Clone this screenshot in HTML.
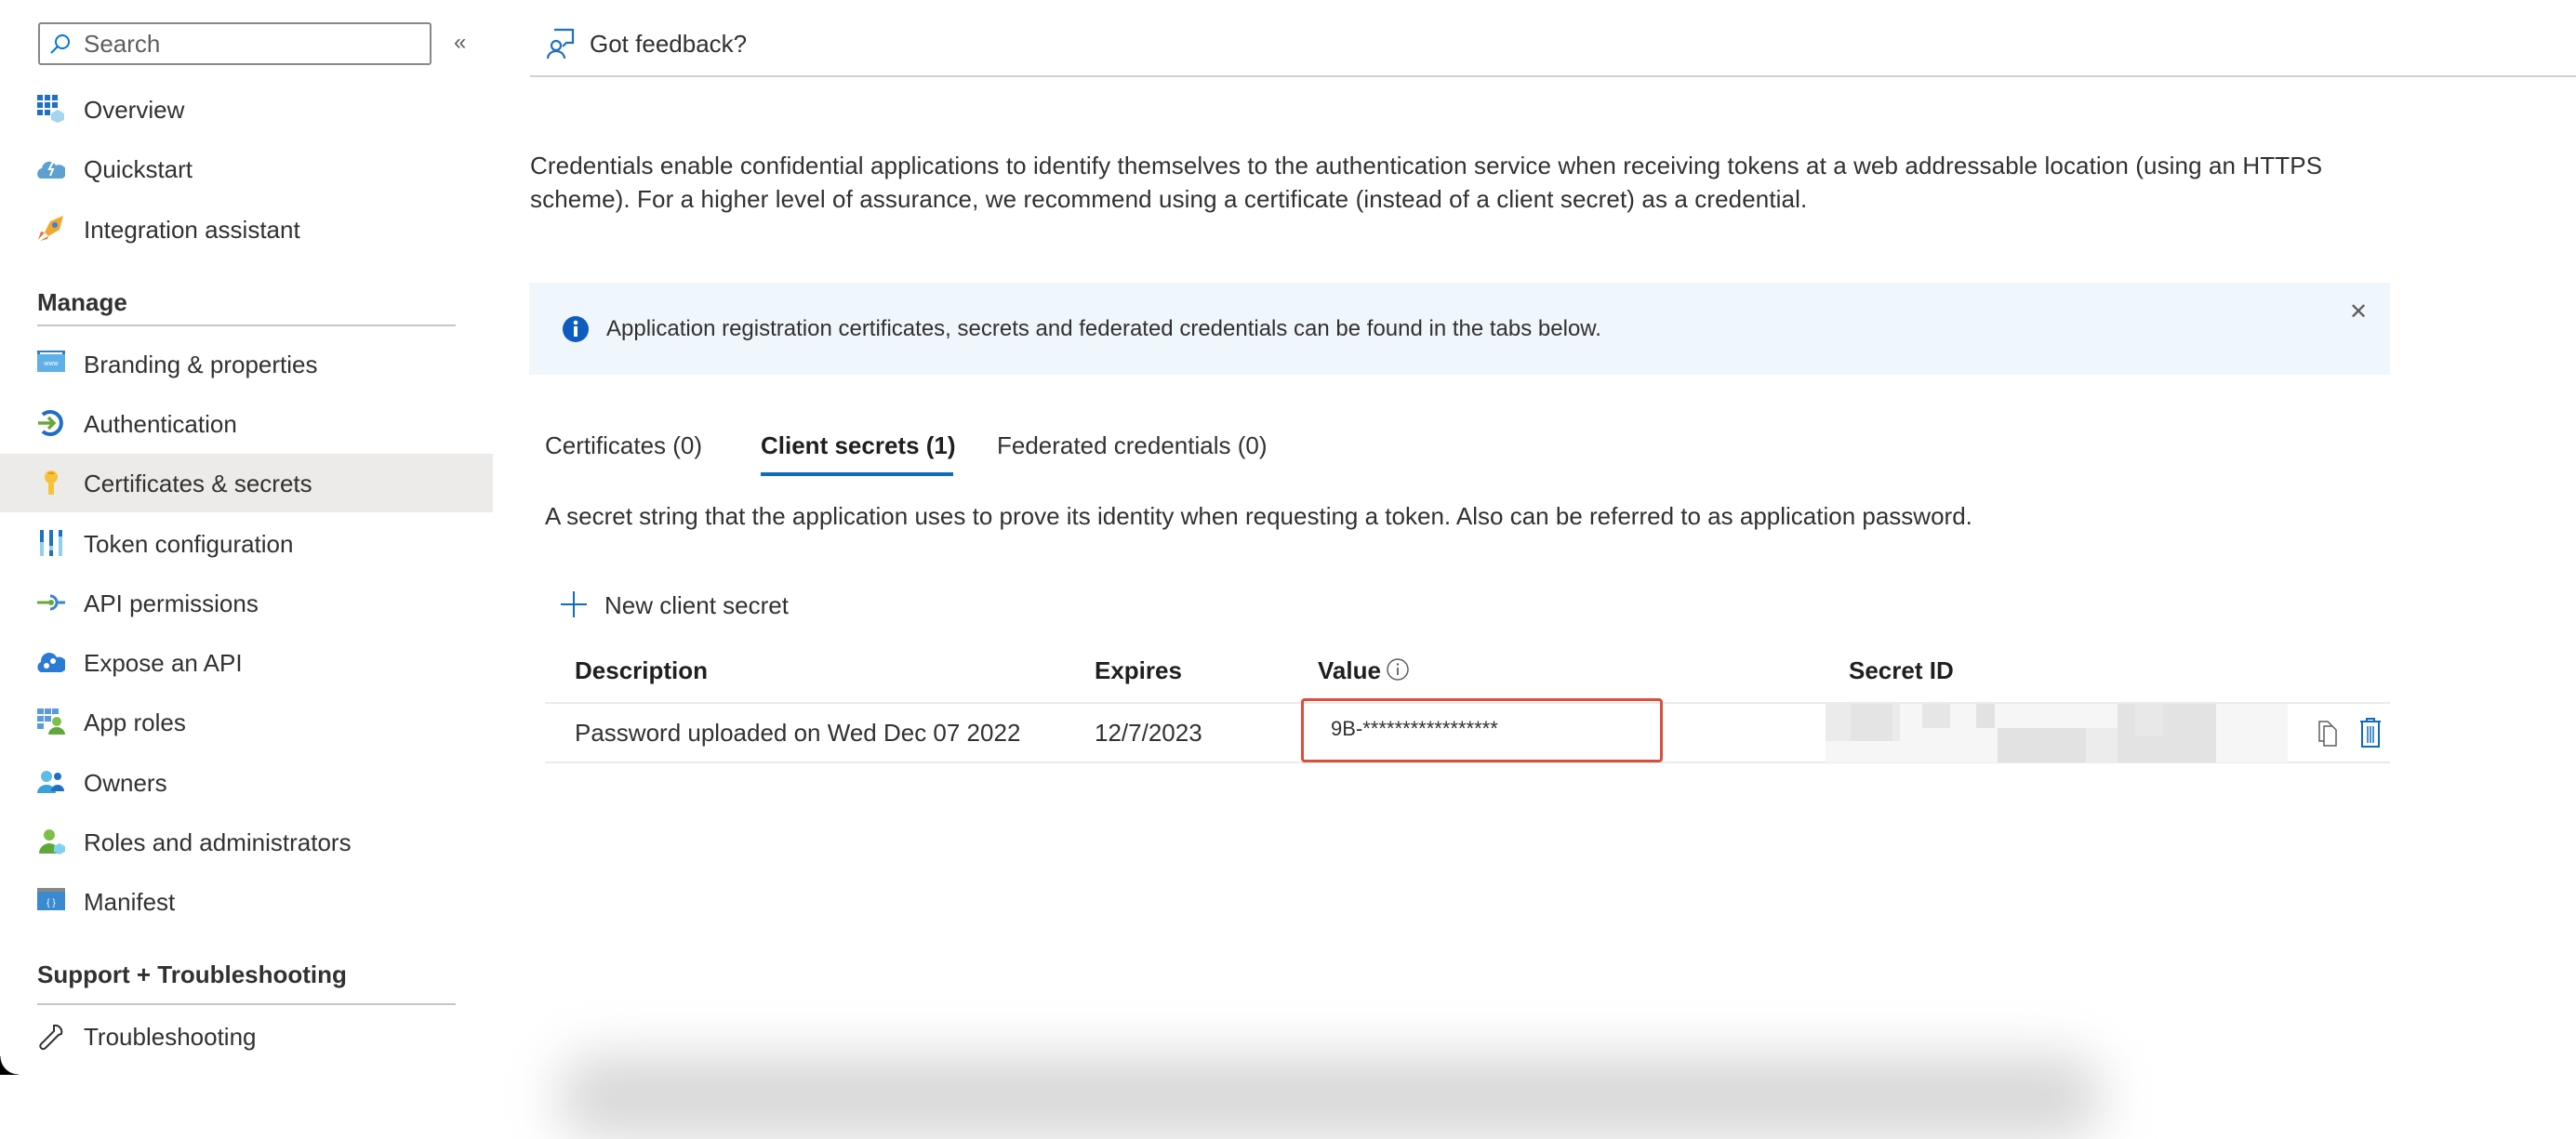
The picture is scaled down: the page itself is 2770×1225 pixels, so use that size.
<!DOCTYPE html>
<html><head><meta charset="utf-8"><style>
*{margin:0;padding:0;box-sizing:border-box}
body{width:2770px;height:1156px;background:#fff;position:relative;overflow:hidden;font-family:"Liberation Sans",sans-serif;color:#323130;font-size:26px}
.a{position:absolute;white-space:nowrap;line-height:1}
.nav{position:absolute;left:90px;white-space:nowrap;line-height:1;font-size:26px}
.ic{position:absolute;left:40px;width:30px;height:30px}
.h{position:absolute;left:40px;font-weight:bold;font-size:26px;line-height:1}
.hl{position:absolute;left:40px;width:450px;height:2px;background:#c8c6c4}
</style></head><body>
<!-- sidebar -->
<div style="position:absolute;left:41px;top:24px;width:423px;height:46px;border:2px solid #8a8886;border-radius:3px"></div>
<svg style="position:absolute;left:52px;top:34px" width="26" height="26" viewBox="0 0 26 26"><circle cx="15" cy="11" r="7" fill="none" stroke="#0078d4" stroke-width="2"/><line x1="10" y1="16" x2="3" y2="23" stroke="#0078d4" stroke-width="2"/></svg>
<div class="a" style="left:90px;top:34px;color:#605e5c">Search</div>
<div class="a" style="left:488px;top:34px;color:#605e5c;font-size:24px">«</div>

<svg class="ic" style="top:102px" viewBox="0 0 30 30"><g fill="#1f6fc5"><rect x="0" y="0" width="6" height="6"/><rect x="8" y="0" width="6" height="6"/><rect x="16" y="0" width="6" height="6"/><rect x="0" y="8" width="6" height="6"/><rect x="8" y="8" width="6" height="6"/><rect x="16" y="8" width="6" height="6"/><rect x="0" y="16" width="6" height="6"/><rect x="8" y="16" width="6" height="6"/></g><path d="M15 20l7-4 7 4v7l-7 3-7-3z" fill="#a3d4f0"/></svg>
<div class="nav" style="top:105px">Overview</div>
<svg class="ic" style="top:166px" viewBox="0 0 30 30"><path d="M3 26a6 6 0 0 1 2-11 8 8 0 0 1 15-3 7 7 0 0 1 7 14z" fill="#5ea0d0"/><path d="M17 8l-4 8h4l-3 7" stroke="#fff" stroke-width="2" fill="none"/></svg>
<div class="nav" style="top:169px">Quickstart</div>
<svg class="ic" style="top:230px" viewBox="0 0 30 30"><path d="M28 2L14 8 8 20l4 4 12-7z" fill="#f0a830"/><path d="M8 20l-7 8 3-9zM12 24l-9 5 8-2z" fill="#e8732a"/><circle cx="19" cy="12" r="3" fill="#3a85d0"/></svg>
<div class="nav" style="top:234px">Integration assistant</div>

<div class="h" style="top:312px">Manage</div>
<div class="hl" style="top:349px"></div>

<svg class="ic" style="top:375px" viewBox="0 0 30 30"><rect x="0" y="2" width="30" height="23" fill="#5fb0e8"/><rect x="0" y="2" width="30" height="4" fill="#2d7ec5"/><rect x="3" y="4" width="24" height="2" fill="#fff"/><text x="15" y="18" font-size="7" fill="#fff" text-anchor="middle" font-family="Liberation Sans">www</text></svg>
<div class="nav" style="top:379px">Branding &amp; properties</div>
<svg class="ic" style="top:440px" viewBox="0 0 30 30"><path d="M6 6a12 12 0 1 1 0 18" fill="none" stroke="#1f6fc5" stroke-width="4"/><path d="M1 15h16M12 9l6 6-6 6" fill="none" stroke="#6aa83a" stroke-width="3.5"/></svg>
<div class="nav" style="top:443px">Authentication</div>
<div style="position:absolute;left:0;top:488px;width:530px;height:63px;background:#edebe9"></div>
<svg class="ic" style="top:504px" viewBox="0 0 30 30"><circle cx="15" cy="9" r="7" fill="#f6c338"/><rect x="12" y="12" width="6" height="16" fill="#f6c338"/><rect x="12" y="4" width="6" height="2" fill="#e09b10"/></svg>
<div class="nav" style="top:507px">Certificates &amp; secrets</div>
<svg class="ic" style="top:569px" viewBox="0 0 30 30"><g fill="#1f6fc5"><rect x="3" y="1" width="4" height="28"/><rect x="13" y="1" width="4" height="28"/><rect x="23" y="1" width="4" height="28"/></g><g fill="#8fd0f0"><rect x="3" y="14" width="4" height="15"/><rect x="13" y="18" width="4" height="5"/><rect x="23" y="8" width="4" height="21"/></g></svg>
<div class="nav" style="top:572px">Token configuration</div>
<svg class="ic" style="top:633px" viewBox="0 0 30 30"><path d="M0 15h14" stroke="#6aa83a" stroke-width="3"/><path d="M14 8a7 7 0 1 1 0 14" fill="none" stroke="#3a85d0" stroke-width="3"/><path d="M20 15h10" stroke="#3a85d0" stroke-width="3"/><circle cx="15" cy="15" r="3" fill="#6aa83a"/></svg>
<div class="nav" style="top:636px">API permissions</div>
<svg class="ic" style="top:697px" viewBox="0 0 30 30"><path d="M4 26a6 6 0 0 1 0-11 9 9 0 0 1 17-5 7 7 0 0 1 5 16z" fill="#2b7ad4"/><circle cx="10" cy="19" r="3" fill="#fff"/><circle cx="17" cy="14" r="3" fill="#fff"/></svg>
<div class="nav" style="top:700px">Expose an API</div>
<svg class="ic" style="top:761px" viewBox="0 0 30 30"><g fill="#5a9ae0"><rect x="0" y="1" width="7" height="6"/><rect x="8" y="1" width="7" height="6"/><rect x="16" y="1" width="7" height="6"/><rect x="0" y="9" width="7" height="6"/><rect x="8" y="9" width="7" height="6"/><rect x="0" y="17" width="7" height="6"/></g><circle cx="21" cy="15" r="5" fill="#7cc04a"/><path d="M12 29a9 8 0 0 1 18 0z" fill="#5ea83a"/></svg>
<div class="nav" style="top:764px">App roles</div>
<svg class="ic" style="top:826px" viewBox="0 0 30 30"><circle cx="10" cy="9" r="6" fill="#5ebde8"/><path d="M0 27a10 9 0 0 1 20 0z" fill="#3aa0d8"/><circle cx="22" cy="9" r="4" fill="#1f6fc5"/><path d="M15 25a7 7 0 0 1 14 0z" fill="#1f6fc5"/></svg>
<div class="nav" style="top:829px">Owners</div>
<svg class="ic" style="top:890px" viewBox="0 0 30 30"><circle cx="13" cy="8" r="6" fill="#7cc04a"/><path d="M2 28a11 11 0 0 1 22 0z" fill="#5ea83a"/><path d="M18 20l6-3 6 3v6l-6 3-6-3z" fill="#7fd3f0"/></svg>
<div class="nav" style="top:893px">Roles and administrators</div>
<svg class="ic" style="top:954px" viewBox="0 0 30 30"><rect x="0" y="1" width="30" height="24" fill="#3a8ad0"/><rect x="0" y="1" width="30" height="4" fill="#8a8886"/><text x="15" y="20" font-size="10" fill="#fff" text-anchor="middle" font-family="Liberation Sans">{ }</text></svg>
<div class="nav" style="top:957px">Manifest</div>

<div class="h" style="top:1035px">Support + Troubleshooting</div>
<div class="hl" style="top:1079px"></div>
<svg class="ic" style="top:1100px" viewBox="0 0 30 30"><path d="M18 3a7 7 0 0 1 8 9l-3 1-14 14a3 3 0 0 1-5-4L18 9z" fill="none" stroke="#323130" stroke-width="2"/></svg>
<div class="nav" style="top:1102px">Troubleshooting</div>

<!-- header -->
<svg style="position:absolute;left:584px;top:30px" width="36" height="34" viewBox="0 0 36 34"><path d="M12 2h20v14h-7l-4 4" fill="none" stroke="#1f6fc5" stroke-width="2.2"/><circle cx="14" cy="19" r="5" fill="none" stroke="#1f6fc5" stroke-width="2.2"/><path d="M5 33a9 8 0 0 1 18 0" fill="none" stroke="#1f6fc5" stroke-width="2.2"/></svg>
<div class="a" style="left:634px;top:34px">Got feedback?</div>
<div style="position:absolute;left:570px;top:81px;width:2200px;height:2px;background:#d2d0ce"></div>

<div class="a" style="left:570px;top:160px;line-height:36px;letter-spacing:0.1px">Credentials enable confidential applications to identify themselves to the authentication service when receiving tokens at a web addressable location (using an HTTPS<br>scheme). For a higher level of assurance, we recommend using a certificate (instead of a client secret) as a credential.</div>

<div style="position:absolute;left:569px;top:304px;width:2001px;height:99px;background:#eff6fc"></div>
<svg style="position:absolute;left:604px;top:339px" width="30" height="30" viewBox="0 0 30 30"><circle cx="15" cy="15" r="14" fill="#0f5cc0"/><rect x="13" y="12" width="4" height="11" fill="#fff"/><circle cx="15" cy="8" r="2.3" fill="#fff"/></svg>
<div class="a" style="left:652px;top:342px;font-size:24px">Application registration certificates, secrets and federated credentials can be found in the tabs below.</div>
<div class="a" style="left:2526px;top:324px;font-size:24px;color:#605e5c">✕</div>

<div class="a" style="left:586px;top:466px">Certificates (0)</div>
<div class="a" style="left:818px;top:466px;font-weight:bold;color:#201f1e">Client secrets (1)</div>
<div class="a" style="left:1072px;top:466px">Federated credentials (0)</div>
<div style="position:absolute;left:818px;top:508px;width:207px;height:4px;background:#0f6cbd"></div>

<div class="a" style="left:586px;top:542px">A secret string that the application uses to prove its identity when requesting a token. Also can be referred to as application password.</div>

<svg style="position:absolute;left:602px;top:635px" width="30" height="30" viewBox="0 0 30 30"><path d="M15 1v28M1 15h28" stroke="#0f6cbd" stroke-width="2"/></svg>
<div class="a" style="left:650px;top:638px">New client secret</div>

<div class="a" style="left:618px;top:708px;font-weight:bold;color:#201f1e">Description</div>
<div class="a" style="left:1177px;top:708px;font-weight:bold;color:#201f1e">Expires</div>
<div class="a" style="left:1417px;top:708px;font-weight:bold;color:#201f1e">Value</div>
<svg style="position:absolute;left:1490px;top:707px" width="26" height="26" viewBox="0 0 26 26"><circle cx="13" cy="13" r="11" fill="none" stroke="#605e5c" stroke-width="1.5"/><path d="M13 11v8" stroke="#605e5c" stroke-width="1.8"/><circle cx="13" cy="7.5" r="1.2" fill="#605e5c"/></svg>
<div class="a" style="left:1988px;top:708px;font-weight:bold;color:#201f1e">Secret ID</div>

<div style="position:absolute;left:586px;top:755px;width:1984px;height:2px;background:#edebe9"></div>
<div style="position:absolute;left:586px;top:819px;width:1984px;height:2px;background:#edebe9"></div>
<div class="a" style="left:618px;top:775px">Password uploaded on Wed Dec 07 2022</div>
<div class="a" style="left:1177px;top:775px">12/7/2023</div>
<div style="position:absolute;left:1399px;top:751px;width:389px;height:69px;border:3px solid #d9503a;border-radius:4px"></div>
<div class="a" style="left:1431px;top:773px;font-size:22px">9B-*****************</div>

<div style="position:absolute;left:1963px;top:757px;width:497px;height:63px;background:#f6f6f6"></div>
<div style="position:absolute;left:1963px;top:757px;width:80px;height:40px;background:#ebebeb"></div>
<div style="position:absolute;left:1990px;top:757px;width:45px;height:40px;background:#e4e4e4"></div>
<div style="position:absolute;left:2067px;top:757px;width:30px;height:26px;background:#e6e6e6"></div>
<div style="position:absolute;left:2125px;top:757px;width:20px;height:26px;background:#e2e2e2"></div>
<div style="position:absolute;left:2148px;top:783px;width:95px;height:37px;background:#e2e2e2"></div>
<div style="position:absolute;left:2243px;top:783px;width:50px;height:37px;background:#ececec"></div>
<div style="position:absolute;left:2277px;top:757px;width:106px;height:63px;background:#e3e3e3"></div>
<div style="position:absolute;left:2296px;top:757px;width:30px;height:35px;background:#e8e8e8"></div>

<svg style="position:absolute;left:2493px;top:775px" width="22" height="28" viewBox="0 0 22 28"><path d="M1 1h9l4 4v17H1z" fill="#fff" stroke="#605e5c" stroke-width="1.5"/><path d="M6 6h9l4 4v17H6z" fill="#fff" stroke="#605e5c" stroke-width="1.5"/></svg>
<svg style="position:absolute;left:2537px;top:771px" width="24" height="34" viewBox="0 0 24 34"><path d="M1 5h22M8 5V2h8v3M3 5v27h18V5" fill="none" stroke="#0f6cbd" stroke-width="2"/><path d="M9 10v18M12 10v18M15 10v18" stroke="#0f6cbd" stroke-width="1.5"/></svg>

<div style="position:absolute;left:600px;top:1135px;width:1660px;height:90px;background:#d8d8d8;filter:blur(28px);border-radius:40px"></div>
<div style="position:absolute;left:0;top:1136px;width:20px;height:20px;background:radial-gradient(circle at 100% 0,transparent 19px,#000 20px)"></div>
</body></html>
